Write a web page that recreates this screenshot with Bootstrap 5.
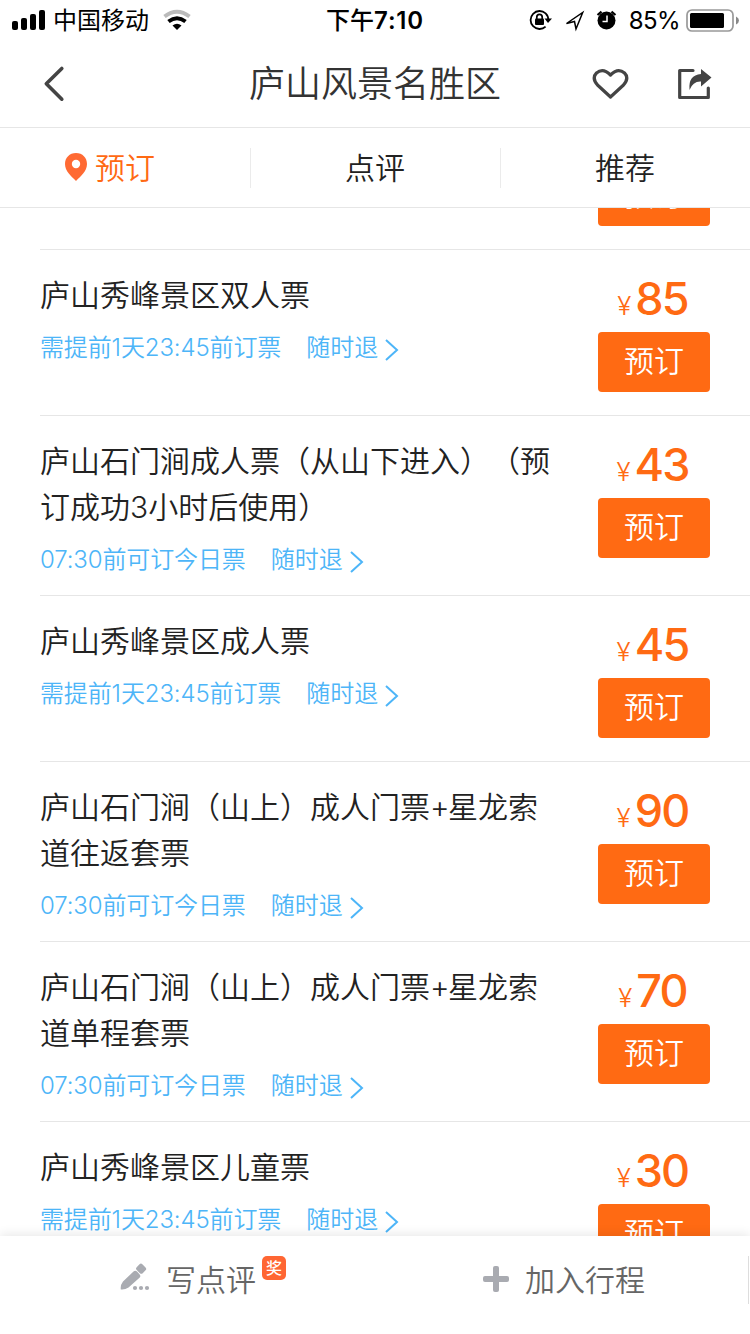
<!DOCTYPE html>
<html lang="zh-CN">
<head>
<meta charset="utf-8">
<meta name="viewport" content="width=device-width, initial-scale=1">
<title>庐山风景名胜区</title>
<link href="https://cdn.jsdelivr.net/npm/bootstrap@5.3.0/dist/css/bootstrap.min.css" rel="stylesheet">
<style>
  body { font-family: Inter, "Noto Sans CJK SC", sans-serif; font-weight: 350; color: #222; text-spacing-trim: space-all; }
  .screen { height: 1334px; }
  .status-bar { height: 40px; font-size: 24px; line-height: 40px; color: #000; font-weight: 400; }
  .status-bar > div { flex: 1 1 0; }
  .status-bar span { padding-top: 2px; }
  .clock { font-weight: 500; }
  .clock b { font-weight: 600; letter-spacing: .8px; }
  .battery-text { letter-spacing: -.6px; margin-left: 9px; }
  .title-bar { height: 88px; border-bottom: 1px solid #e6e6e6; color: #444; }
  .title-bar h1 { font-size: 36px; font-weight: 350; line-height: 88px; color: #333; }
  .title-side { width: 160px; }
  .tabs { height: 80px; border-bottom: 1px solid #e6e6e6; font-size: 30px; }
  .tabs a { color: #222; padding-top: 2px; }
  .tabs a + a::before { content: ""; position: absolute; left: 0; top: 20px; height: 40px; border-left: 1px solid #ebebeb; }
  .tabs a.active { color: #ff6a13; }
  .ticket { margin-left: 40px; padding-right: 40px; border-bottom: 1px solid #e6e6e6; }
  .ticket-cut { height: 42px; padding-bottom: 23px; }
  .ticket-text { width: 520px; padding: 22px 0 18px; }
  .ticket-name { font-size: 30px; line-height: 46px; font-weight: 350; }
  .ticket-name i { font-style: normal; letter-spacing: -1.5px; }
  .ticket-note { font-size: 24px; line-height: 34px; margin-top: 13px; color: #4db5f8; }
  .ticket-note span:first-child { letter-spacing: -.13px; }
  .ticket-note .gap { margin-left: 25px; }
  .ticket-note svg { margin: 3px 0 0 7px; }
  .ticket-buy { width: 112px; padding: 23px 0; }
  .price { height: 59px; line-height: 51px; color: #ff6a13; font-size: 45px; font-weight: 450; letter-spacing: -1.8px; white-space: nowrap; padding-right: 3px; }
  .price small { font-size: 26px; font-weight: 350; letter-spacing: 0; margin-right: 4px; }
  .btn-book { --bs-btn-color: #fff; --bs-btn-bg: #ff6a13; --bs-btn-hover-bg: #f06010; --bs-btn-hover-color: #fff; --bs-btn-active-bg: #e55b0e;
    --bs-btn-border-width: 0; --bs-btn-border-radius: 4px; --bs-btn-padding-x: 0; --bs-btn-padding-y: 0;
    width: 112px; height: 60px; line-height: 58px; padding-bottom: 2px; font-size: 30px; font-weight: 350; }
  .bottom-bar { height: 98px; font-size: 30px; color: #666; box-shadow: 0 -2px 10px rgba(0,0,0,.09); z-index: 2; }
  .bottom-bar > * { height: 88px; }
  .award { width: 24px; height: 24px; border-radius: 5px; background: #ff6633; color: #fff; font-size: 16px; line-height: 24px; font-weight: 500; margin: -24px 0 0 6px; }
  .edge-line { width: 1px; height: 48px !important; background: #ddd; right: 1px; top: 20px; }
</style>
</head>
<body>
<div class="screen d-flex flex-column bg-white overflow-hidden">
  <header class="status-bar d-flex align-items-center flex-shrink-0">
    <div class="d-flex align-items-center">
      <svg class="ms-2" width="40" height="22" viewBox="8 9 40 22"><rect x="12" y="21" width="6" height="9" rx="2"/><rect x="21" y="18" width="6" height="12" rx="2"/><rect x="30" y="14" width="6" height="16" rx="2"/><rect x="39" y="10" width="6" height="20" rx="2"/></svg>
      <span style="margin-left:5px">中国移动</span>
      <svg width="32" height="24" viewBox="160 8 32 24" style="margin-left:11px" fill="none"><path d="M164.500 16.500Q177 7 189.500 16.500" stroke="#bbb" stroke-width="4"/><path d="M168.500 21.500Q177 15 185.500 21.500" stroke="#000" stroke-width="4"/><path d="M172.500 25.500Q177 22 181.500 25.500L177 30Z" fill="#000"/></svg>
    </div>
    <span class="clock">下午<b>7:10</b></span>
    <div class="d-flex align-items-center justify-content-end">
      <svg width="92" height="26" viewBox="530 7 92 26"><path d="M547.600 13.300A9 9 0 1 0 547.600 26.700M547.600 13.300A9 9 0 0 1 550.300 20" fill="none" stroke="#000" stroke-width="1.800"/><path d="M546.500 18.500h7.500L550 23z"/><rect x="537" y="18.500" width="9" height="6.500" rx="1"/><path d="M538.800 19v-2a2.700 2.700 0 0 1 5.400 0v2" fill="none" stroke="#000" stroke-width="1.700"/><path d="M568.500 23.500L584.700 12.500L578 29L576.500 21.500Z" fill="none" stroke="#000" stroke-width="1.500"/><circle cx="608.500" cy="20.500" r="9"/><path d="M599.500 15l4-3.300M617.500 15l-4-3.300" stroke="#000" stroke-width="2.200"/><path d="M609 15.500v6h-4.500" stroke="#fff" stroke-width="1.500" fill="none"/></svg>
      <span class="battery-text">85%</span>
      <svg width="54" height="24" viewBox="685 8 54 24" style="margin:0 11px 0 5px"><rect x="687" y="10" width="46" height="21" rx="5" fill="none" stroke="#999" stroke-width="1.700"/><rect x="690" y="13" width="34" height="15" rx="1.500"/><path d="M736 16.500v8q3-1.500 3-4t-3-4" fill="#888"/></svg>
    </div>
  </header>

  <nav class="title-bar d-flex align-items-center justify-content-between flex-shrink-0">
    <div class="title-side"><svg width="24" height="38" viewBox="42 64 24 38" style="margin-left:42px"><path d="M61.800 67.500L46.300 82.800L61.800 98.200" fill="none" stroke="#444" stroke-width="3.600" stroke-linecap="round" stroke-linejoin="round"/></svg></div>
    <h1 class="mb-0">庐山风景名胜区</h1>
    <div class="title-side">
      <svg width="122" height="34" viewBox="590 66 122 34" fill="none" stroke="#444" stroke-width="3.200"><path d="M610.500 96L597.500 84Q591.500 77 596.500 72Q603 66.500 610.500 74Q618 66.500 624.500 72Q629.500 77 623.500 84Z" stroke-linejoin="round"/><path d="M693 69.500H679.700V96.500H708.300V87" stroke-linecap="round" stroke-linejoin="round"/><path d="M701 68L711.500 76.500L701 85.500V80.500Q693 80 689.500 89Q688 74 701 73Z" fill="#444" stroke="none"/></svg>
    </div>
  </nav>

  <nav class="tabs nav row g-0 flex-shrink-0">
    <a class="col active d-flex align-items-center justify-content-center text-decoration-none position-relative" href="#"><svg width="24" height="30" viewBox="64 151 24 30" style="margin-right:7px;margin-left:-31px;margin-top:-4px"><path d="M76 152C69.500 152 65 156.700 65 163C65 170 71 175 76 180C81 175 87 170 87 163C87 156.700 82.500 152 76 152Z" fill="#ff6a33"/><circle cx="76" cy="163" r="4.200" fill="#fff"/></svg>预订</a>
    <a class="col d-flex align-items-center justify-content-center text-decoration-none position-relative" href="#">点评</a>
    <a class="col d-flex align-items-center justify-content-center text-decoration-none position-relative" href="#">推荐</a>
  </nav>

  <main class="flex-grow-1 overflow-hidden" style="min-height:0">
    <div class="ticket ticket-cut d-flex justify-content-end align-items-end overflow-hidden"><button class="btn btn-book flex-shrink-0">预订</button></div>

    <div class="ticket d-flex justify-content-between">
      <div class="ticket-text"><h2 class="ticket-name mb-0">庐山秀峰景区双人票</h2><div class="ticket-note d-flex align-items-center"><span>需提前1天23:45前订票</span><span class="gap">随时退</span><svg width="14" height="24" viewBox="0 0 14 24"><path d="M1 2L12 12L1 22" fill="none" stroke="currentColor" stroke-width="2"/></svg></div></div>
      <div class="ticket-buy text-center"><div class="price"><small>¥</small>85</div><button class="btn btn-book">预订</button></div>
    </div>

    <div class="ticket d-flex justify-content-between">
      <div class="ticket-text"><h2 class="ticket-name mb-0">庐山石门涧成人票（从山下进入）（预订成功3小时后使用）</h2><div class="ticket-note d-flex align-items-center"><span>07:30前可订今日票</span><span class="gap">随时退</span><svg width="14" height="24" viewBox="0 0 14 24"><path d="M1 2L12 12L1 22" fill="none" stroke="currentColor" stroke-width="2"/></svg></div></div>
      <div class="ticket-buy text-center"><div class="price"><small>¥</small>43</div><button class="btn btn-book">预订</button></div>
    </div>

    <div class="ticket d-flex justify-content-between">
      <div class="ticket-text"><h2 class="ticket-name mb-0">庐山秀峰景区成人票</h2><div class="ticket-note d-flex align-items-center"><span>需提前1天23:45前订票</span><span class="gap">随时退</span><svg width="14" height="24" viewBox="0 0 14 24"><path d="M1 2L12 12L1 22" fill="none" stroke="currentColor" stroke-width="2"/></svg></div></div>
      <div class="ticket-buy text-center"><div class="price"><small>¥</small>45</div><button class="btn btn-book">预订</button></div>
    </div>

    <div class="ticket d-flex justify-content-between">
      <div class="ticket-text"><h2 class="ticket-name mb-0">庐山石门涧（山上）成人门票<i>+</i>星龙索道往返套票</h2><div class="ticket-note d-flex align-items-center"><span>07:30前可订今日票</span><span class="gap">随时退</span><svg width="14" height="24" viewBox="0 0 14 24"><path d="M1 2L12 12L1 22" fill="none" stroke="currentColor" stroke-width="2"/></svg></div></div>
      <div class="ticket-buy text-center"><div class="price"><small>¥</small>90</div><button class="btn btn-book">预订</button></div>
    </div>

    <div class="ticket d-flex justify-content-between">
      <div class="ticket-text"><h2 class="ticket-name mb-0">庐山石门涧（山上）成人门票<i>+</i>星龙索道单程套票</h2><div class="ticket-note d-flex align-items-center"><span>07:30前可订今日票</span><span class="gap">随时退</span><svg width="14" height="24" viewBox="0 0 14 24"><path d="M1 2L12 12L1 22" fill="none" stroke="currentColor" stroke-width="2"/></svg></div></div>
      <div class="ticket-buy text-center"><div class="price"><small>¥</small>70</div><button class="btn btn-book">预订</button></div>
    </div>

    <div class="ticket d-flex justify-content-between">
      <div class="ticket-text"><h2 class="ticket-name mb-0">庐山秀峰景区儿童票</h2><div class="ticket-note d-flex align-items-center"><span>需提前1天23:45前订票</span><span class="gap">随时退</span><svg width="14" height="24" viewBox="0 0 14 24"><path d="M1 2L12 12L1 22" fill="none" stroke="currentColor" stroke-width="2"/></svg></div></div>
      <div class="ticket-buy text-center"><div class="price"><small>¥</small>30</div><button class="btn btn-book">预订</button></div>
    </div>
  </main>

  <footer class="bottom-bar d-flex bg-white flex-shrink-0 position-relative">
    <div class="d-flex align-items-center" style="width:375px;padding-left:120px">
      <svg width="30" height="28" viewBox="120 1263 30 28" fill="#a9abb1" style="margin-right:16px;margin-top:-6px"><rect x="137" y="1265" width="8.500" height="8" rx="2" transform="rotate(45 141.500 1268.700)"/><path d="M133.500 1271.500a2.500 2.500 0 0 1 3.500 0l2.500 2.700a2.500 2.500 0 0 1 0 3.500L128.500 1287.500Q125 1290 120.800 1289.500Q120.200 1285 123 1281.500Z"/><circle cx="135" cy="1288" r="2.100"/><circle cx="141" cy="1288" r="2.100"/><circle cx="147" cy="1288" r="2.100"/></svg>
      <span>写点评</span><span class="award text-center">奖</span>
    </div>
    <div class="d-flex align-items-center" style="padding-left:108px">
      <svg width="26" height="26" viewBox="0 0 26 26" fill="#a9abb1" style="margin-right:16px;margin-top:-2px"><rect x="10" width="6" height="26" rx="2"/><rect y="10" width="26" height="6" rx="2"/></svg>
      <span>加入行程</span>
    </div>
    <span class="edge-line position-absolute"></span>
  </footer>
</div>
<script src="https://cdn.jsdelivr.net/npm/bootstrap@5.3.0/dist/js/bootstrap.bundle.min.js"></script>
</body>
</html>
